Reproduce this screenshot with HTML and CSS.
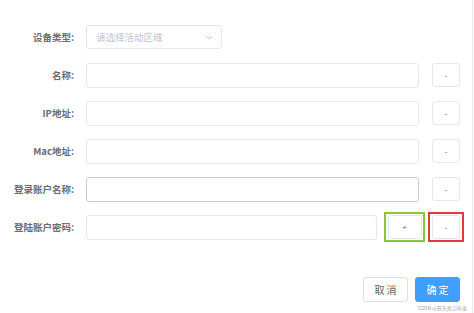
FILE: index.html
```html
<!DOCTYPE html>
<html lang="zh">
<head>
    <meta charset="UTF-8">
    <title>设备表单</title>
    <link rel="stylesheet" href="styles.css">
</head>
<body>
    <div class="dialog">
        <div class="form">
            <div class="row">
                <label class="label">设备类型:</label>
                <div class="select">
                    <span class="placeholder">请选择活动区域</span>
                    <svg class="arrow" width="8" height="5" viewBox="0 0 8 5"><path d="M1 1l3 3 3-3" fill="none" stroke="#c0c4cc" stroke-width="0.8"/></svg>
                </div>
            </div>
            <div class="row">
                <label class="label">名称:</label>
                <div class="input"></div>
                <button class="btn-small">-</button>
            </div>
            <div class="row">
                <label class="label">IP地址:</label>
                <div class="input"></div>
                <button class="btn-small">-</button>
            </div>
            <div class="row">
                <label class="label">Mac地址:</label>
                <div class="input"></div>
                <button class="btn-small">-</button>
            </div>
            <div class="row">
                <label class="label">登录账户名称:</label>
                <div class="input hover"></div>
                <button class="btn-small">-</button>
            </div>
            <div class="row">
                <label class="label">登陆账户密码:</label>
                <div class="input short"></div>
                <div class="mark green"><button class="btn-small wide">+</button></div>
                <div class="mark red"><button class="btn-small">-</button></div>
            </div>
        </div>
        <div class="footer">
            <button class="btn">取 消</button>
            <button class="btn primary">确 定</button>
        </div>
        <div class="watermark">CSDN @石头剪刀布龙</div>
    </div>
</body>
</html>
```

FILE: styles.css
```css
body, html {
    margin: 0;
    padding: 0;
    background-color: #ffffff;
    font-family: "Noto Sans CJK SC", "Liberation Sans", sans-serif;
}

.dialog {
    position: relative;
    width: 473px;
    height: 313px;
    border-right: 1px solid #ececec;
    box-sizing: border-box;
}

.form {
    padding-top: 25px;
    display: flex;
    flex-direction: column;
    gap: 14px;
}

.row {
    display: flex;
    align-items: center;
    height: 24px;
}

.label {
    width: 74px;
    padding-right: 12px;
    text-align: right;
    font-size: 9.5px;
    font-weight: bold;
    color: #6a6c70;
}

.select {
    width: 136px;
    height: 24px;
    box-sizing: border-box;
    border: 1px solid #e4e7ed;
    border-radius: 3px;
    display: flex;
    align-items: center;
    justify-content: space-between;
    padding: 0 8px 0 9px;
}

.placeholder {
    font-size: 9.5px;
    color: #c0c4cc;
}

.input {
    width: 333px;
    height: 25px;
    box-sizing: border-box;
    border: 1px solid #e4e7ed;
    border-radius: 3px;
}

.input.hover {
    border-color: #c8cbd1;
}

.input.short {
    width: 291px;
}

.btn-small {
    margin-left: 13px;
    width: 28px;
    height: 24px;
    box-sizing: border-box;
    border: 1px solid #e4e7ed;
    border-radius: 3px;
    background: #ffffff;
    font-size: 8px;
    color: #707070;
    padding: 0;
    font-family: "Liberation Sans", sans-serif;
}

.btn-small.wide {
    width: 34px;
}

.mark {
    display: flex;
    align-items: center;
    justify-content: center;
    height: 30px;
    box-sizing: border-box;
    border: 2px solid;
}

.mark .btn-small {
    margin-left: 0;
}

.mark.green {
    margin-left: 7px;
    width: 41px;
    border-color: #8cc63f;
}

.mark.red {
    margin-left: 3px;
    width: 36px;
    border-color: #e0393e;
}

.footer {
    display: flex;
    justify-content: flex-end;
    gap: 7px;
    padding-right: 12px;
    margin-top: 38px;
}

.btn {
    width: 45px;
    height: 25px;
    box-sizing: border-box;
    border: 1px solid #dcdfe6;
    border-radius: 3px;
    background: #ffffff;
    color: #606266;
    font-size: 10px;
    font-family: "Noto Sans CJK SC", sans-serif;
    padding: 0;
}

.btn.primary {
    background: #409eff;
    border-color: #409eff;
    color: #ffffff;
}

.watermark {
    position: absolute;
    right: 5px;
    bottom: 2px;
    font-size: 5px;
    color: #9a9a9a;
}
```
